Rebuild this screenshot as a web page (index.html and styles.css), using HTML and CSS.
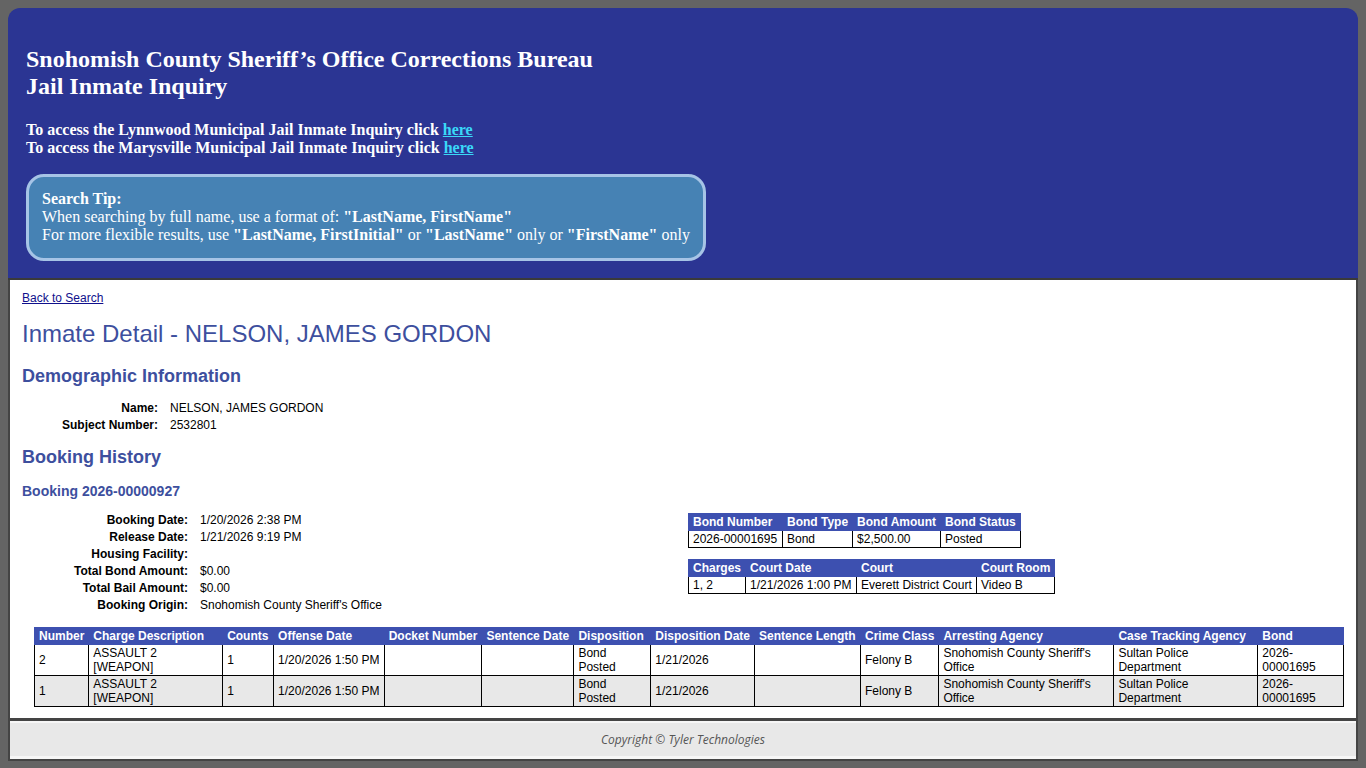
FILE: index.html
```html
<!DOCTYPE html>
<html lang="en">
<head>
<meta charset="utf-8">
<title>Jail Inmate Inquiry</title>
<link rel="stylesheet" href="styles.css">
</head>
<body>
<div class="page">
  <header class="site-header">
    <h1 class="site-title">Snohomish County Sheriff’s Office Corrections Bureau<br>Jail Inmate Inquiry</h1>
    <p class="access-links">To access the Lynnwood Municipal Jail Inmate Inquiry click <a href="#">here</a><br>To access the Marysville Municipal Jail Inmate Inquiry click <a href="#">here</a></p>
    <div class="tip">
      <b>Search Tip:</b><br>
      When searching by full name, use a format of: <b>"LastName, FirstName"</b><br>
      For more flexible results, use <b>"LastName, FirstInitial"</b> or <b>"LastName"</b> only or <b>"FirstName"</b> only
    </div>
  </header>

  <main class="content">
    <a class="back-link" href="#">Back to Search</a>
    <h2 class="detail-title">Inmate Detail - NELSON, JAMES GORDON</h2>

    <h3 class="section-title">Demographic Information</h3>
    <dl class="info demo">
      <dt>Name:</dt><dd>NELSON, JAMES GORDON</dd>
      <dt>Subject Number:</dt><dd>2532801</dd>
    </dl>

    <h3 class="section-title history">Booking History</h3>
    <h4 class="booking-title">Booking 2026-00000927</h4>

    <div class="booking-grid">
      <dl class="info booking">
        <dt>Booking Date:</dt><dd>1/20/2026 2:38 PM</dd>
        <dt>Release Date:</dt><dd>1/21/2026 9:19 PM</dd>
        <dt>Housing Facility:</dt><dd></dd>
        <dt>Total Bond Amount:</dt><dd>$0.00</dd>
        <dt>Total Bail Amount:</dt><dd>$0.00</dd>
        <dt>Booking Origin:</dt><dd>Snohomish County Sheriff's Office</dd>
      </dl>
      <div class="side-tables">
        <table class="grid bond-table">
          <colgroup><col class="c94"><col class="c70"><col class="c88"><col class="c78"></colgroup>
          <thead><tr><th>Bond Number</th><th>Bond Type</th><th>Bond Amount</th><th>Bond Status</th></tr></thead>
          <tbody><tr><td>2026-00001695</td><td>Bond</td><td>$2,500.00</td><td>Posted</td></tr></tbody>
        </table>
        <table class="grid court-table">
          <colgroup><col class="c57"><col class="c111"><col class="c120"><col class="c77"></colgroup>
          <thead><tr><th>Charges</th><th>Court Date</th><th>Court</th><th>Court Room</th></tr></thead>
          <tbody><tr><td>1, 2</td><td>1/21/2026 1:00 PM</td><td>Everett District Court</td><td>Video B</td></tr></tbody>
        </table>
      </div>
    </div>

    <table class="grid charges-table">
      <colgroup>
        <col class="c54"><col class="c134"><col class="c51"><col class="c111"><col class="c97"><col class="c92"><col class="c77"><col class="c103"><col class="c106"><col class="c78"><col class="c176"><col class="c144"><col class="c86">
      </colgroup>
      <thead>
        <tr><th>Number</th><th>Charge Description</th><th>Counts</th><th>Offense Date</th><th>Docket Number</th><th>Sentence Date</th><th>Disposition</th><th>Disposition Date</th><th>Sentence Length</th><th>Crime Class</th><th>Arresting Agency</th><th>Case Tracking Agency</th><th>Bond</th></tr>
      </thead>
      <tbody>
        <tr><td>2</td><td>ASSAULT 2<br>[WEAPON]</td><td>1</td><td>1/20/2026 1:50 PM</td><td></td><td></td><td>Bond<br>Posted</td><td>1/21/2026</td><td></td><td>Felony B</td><td>Snohomish County Sheriff's<br>Office</td><td>Sultan Police<br>Department</td><td>2026-<br>00001695</td></tr>
        <tr class="alt"><td>1</td><td>ASSAULT 2<br>[WEAPON]</td><td>1</td><td>1/20/2026 1:50 PM</td><td></td><td></td><td>Bond<br>Posted</td><td>1/21/2026</td><td></td><td>Felony B</td><td>Snohomish County Sheriff's<br>Office</td><td>Sultan Police<br>Department</td><td>2026-<br>00001695</td></tr>
      </tbody>
    </table>
  </main>

  <footer class="site-footer">Copyright © Tyler Technologies</footer>
</div>
</body>
</html>
```

FILE: styles.css
```css
html, body {
  margin: 0;
  padding: 0;
}
body {
  background: #646464;
  padding: 8px;
  font-family: "Liberation Sans", Arial, sans-serif;
}
.page {
  width: 1350px;
}

/* Header */
.site-header {
  background: #2b3593;
  border-radius: 12px 12px 0 0;
  padding: 38px 18px 17px 18px;
  border-bottom: 2px solid #3a3a3a;
  color: #fff;
  font-family: "Liberation Serif", "Times New Roman", serif;
}
.site-title {
  margin: 0;
  font-size: 24px;
  line-height: 27px;
  font-weight: bold;
}
.access-links {
  margin: 21px 0 0 0;
  font-size: 16px;
  line-height: 18px;
  font-weight: bold;
}
.access-links a {
  color: #3ad8f8;
}
.tip {
  display: inline-block;
  margin-top: 17px;
  background: #4682b4;
  border: 3px solid #a6c4e6;
  border-radius: 18px;
  padding: 13px 13px 14px 13px;
  font-size: 16px;
  line-height: 18px;
}

/* Content */
.content {
  background: #fff;
  border-left: 2px solid #444;
  border-right: 2px solid #444;
  padding: 11px 12px 11px 12px;
  display: flow-root;
}
.back-link {
  display: block;
  width: max-content;
  font-size: 12px;
  line-height: 14px;
  color: #10108c;
}
.detail-title {
  margin: 15px 0 0 0;
  font-size: 24px;
  line-height: 28px;
  font-weight: normal;
  color: #3d4f9e;
}
.section-title {
  margin: 17px 0 0 0;
  font-size: 18px;
  line-height: 22px;
  font-weight: bold;
  color: #3d4f9e;
}
.section-title.history {
  margin-top: 12px;
}
.booking-title {
  margin: 15px 0 0 0;
  font-size: 14px;
  line-height: 17px;
  font-weight: bold;
  color: #3d4f9e;
}
.info {
  display: grid;
  column-gap: 12px;
  margin: 0;
  font-size: 12px;
  line-height: 17px;
  color: #000;
}
.info dt {
  font-weight: bold;
  text-align: right;
}
.info dd {
  margin: 0;
  min-height: 17px;
}
.info.demo {
  grid-template-columns: 136px auto;
  margin-top: 13px;
}
.booking-grid {
  display: grid;
  grid-template-columns: 666px auto;
  margin-top: 12px;
}
.info.booking {
  grid-template-columns: 166px auto;
}
.side-tables {
  padding-top: 1px;
}

/* Tables */
.grid {
  border-collapse: collapse;
  table-layout: fixed;
  font-size: 12px;
  line-height: 14px;
  color: #000;
}
.grid th {
  background: #3d50b0;
  color: #fff;
  font-weight: bold;
  text-align: left;
  padding: 1px 4px;
  border: 1px solid #3d50b0;
  white-space: nowrap;
  overflow: hidden;
}
.grid td {
  border: 1px solid #000;
  padding: 1px 4px;
  vertical-align: middle;
  background: #fff;
}
.grid tr.alt td {
  background: #e8e8e8;
}
.court-table { margin-top: 11px; }
.charges-table {
  margin: 13px 0 0 12px;
}

.c54 { width: 54px; }
.c134 { width: 134px; }
.c51 { width: 51px; }
.c111 { width: 111px; }
.c97 { width: 97px; }
.c92 { width: 92px; }
.c77 { width: 77px; }
.c103 { width: 103px; }
.c106 { width: 106px; }
.c78 { width: 78px; }
.c176 { width: 176px; }
.c144 { width: 144px; }
.c86 { width: 86px; }
.c94 { width: 94px; }
.c70 { width: 70px; }
.c88 { width: 88px; }
.c57 { width: 57px; }
.c120 { width: 120px; }

/* Footer */
.site-footer {
  background: #e8e8e8;
  border: 2px solid #444;
  border-top: 3px solid #444;
  height: 38px;
  box-sizing: content-box;
  box-shadow: inset 0 2px 0 #f6f6f6, inset 0 -3px 0 #f6f6f6;
  text-align: center;
  font-family: "Open Sans", sans-serif;
  font-style: italic;
  font-size: 12px;
  line-height: 38px;
  color: #555;
}
```
